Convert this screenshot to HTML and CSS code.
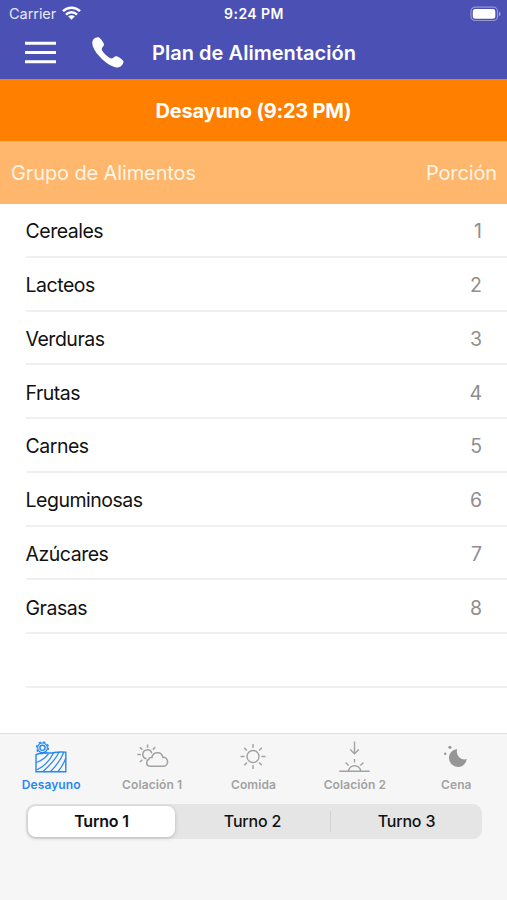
FILE: index.html
```html
<!DOCTYPE html>
<html lang="es">
<head>
<meta charset="utf-8">
<title>Plan de Alimentación</title>
<link rel="stylesheet" href="styles.css">
</head>
<body>
<div class="app">
  <header class="top">
    <div class="status">
      <div class="carrier"><span>Carrier</span>
        <svg class="wifi" width="19" height="14" viewBox="0 0 19 14"><g fill="none" stroke="#fff" stroke-width="2.500"><path d="M1 5.200a12.200 12.200 0 0 1 17 0"/><path d="M4 8.600a7.800 7.800 0 0 1 11 0"/></g><path d="M9.500 13.800L6.200 10.600a4.600 4.600 0 0 1 6.600 0z" fill="#fff"/></svg>
      </div>
      <span class="time">9:24 PM</span>
      <svg class="battery" width="32" height="16" viewBox="0 0 32 16"><rect x="1" y="1.200" width="26.500" height="13.300" rx="4" fill="none" stroke="#fff" stroke-opacity=".4" stroke-width="1.200"/><rect x="2.800" y="3" width="22.500" height="9.800" rx="2.400" fill="#fff"/><path d="M29 5.500c2 .8 2 4 0 4.800z" fill="#fff" fill-opacity=".45"/></svg>
    </div>
    <div class="nav">
      <svg class="menu" width="31" height="24" viewBox="0 0 31 24"><path d="M0 2.200h31M0 11.400h31M0 20.700h31" stroke="#fff" stroke-width="3"/></svg>
      <svg class="phone" width="32" height="32" viewBox="0 0 32 32"><path d="M1.500 2.300C3 .8 5.500-.1 7 .6c1.600.8 4.600 5 5 6.600.4 1.900-2.500 3.400-2.300 5 .3 2.500 6.900 8.800 9.500 9.200 1.700.2 3.500-2.700 5.400-2.200 1.800.5 6 3.300 6.700 4.800.7 1.600-.9 4.200-2.700 5.500-1.500 1.100-3.600 1.300-5.400.8C14.800 27.900 3.700 17.300.8 9.200.1 7.200 0 3.900 1.500 2.300z" fill="#fff"/></svg>
      <h1>Plan de Alimentación</h1>
    </div>
  </header>
  <div class="meal"><span>Desayuno (9:23 PM)</span></div>
  <div class="columns"><span class="group">Grupo de Alimentos</span><span class="portion">Porción</span></div>
  <ul class="foods">
    <li><span>Cereales</span><b>1</b></li>
    <li><span>Lacteos</span><b>2</b></li>
    <li><span>Verduras</span><b>3</b></li>
    <li><span>Frutas</span><b>4</b></li>
    <li><span>Carnes</span><b>5</b></li>
    <li><span>Leguminosas</span><b>6</b></li>
    <li><span>Azúcares</span><b>7</b></li>
    <li><span>Grasas</span><b>8</b></li>
    <li></li>
  </ul>
  <footer class="bottom">
    <nav class="tabs">
      <a class="tab active">
        <svg viewBox="-.500 0 44 40"><g stroke-width="1.400"><circle cx="13" cy="11.800" r="2.600"/><circle cx="13" cy="11.800" r="4.900" stroke-width="1.200"/><circle cx="13" cy="11.800" r="6" stroke-width="1.300" stroke-dasharray="2.300 2.412"/><path d="M6.500 18.700C12 15.500 18 18 25 16.500c4-.8 8-.5 11.300-.3V35.800H6.500z"/><path d="M7 26.500c5-1.700 9-4.500 12-8.800M7 34c7-3 13-9 17-17M13.500 35.500C19 30.500 26 24 29.500 16M21 35.500c6-6 10.500-12 13.500-19.500M28.500 35.500c3.500-4 6-8.500 7.800-13.500" stroke-width="1.200"/></g></svg>
        <span>Desayuno</span></a>
      <a class="tab">
        <svg viewBox="-1.900 0 44 40"><g stroke-width="1.500"><path d="M19 30.300h12c2.800 0 4.700-2 4.700-4.500s-2-4.700-4.700-4.400c-.6-3-2.800-4.700-5.300-4.700-3 0-5.200 2-5.700 4.800-1.500-.4-2.700.4-3 1.700-1.400.6-2.200 1.700-2.200 3.200 0 2.300 1.800 3.900 4.200 3.900z"/><path d="M14.700 22.800a4.500 4.500 0 1 1 5.100-5.500M15.700 8.500v3.300M8 11.300l2.500 2.500M5.500 18.500H9M8 26l2.500-2.300M23.300 11.300L21 13.600"/></g></svg>
        <span>Colación 1</span></a>
      <a class="tab">
        <svg viewBox="0 0 44 40"><g stroke-width="1.400"><circle cx="22" cy="20.500" r="6"/><path d="M22 8v4M22 29v4M9.500 20.500h4M30.500 20.500h4M13.200 11.700l2.700 2.700M28.100 26.600l2.700 2.700M30.800 11.700l-2.700 2.700M15.900 26.600l-2.700 2.700"/></g></svg>
        <span>Comida</span></a>
      <a class="tab">
        <svg viewBox="-1.100 0 44 40"><g stroke-width="1.400"><path d="M20.400 5.500v12M16.100 13.500l4.300 4.300 4.300-4.300M5.200 35.300h30.400M14.500 35.300a6 5.600 0 0 1 12 0M20.400 23v3.500M11.500 26.500l3 3M29.300 26.500l-3 3"/></g></svg>
        <span>Colación 2</span></a>
      <a class="tab">
        <svg viewBox="-1.700 0 44 40"><path d="M21.500 13C16.500 13.700 13.300 17.500 13.300 22a9 9 0 0 0 9 9c4.300 0 8-3 8.700-8-2.500.8-5.200.4-7.300-1.500-2.400-2.200-3-5.300-2.200-8.500z" class="moon"/><circle cx="14.200" cy="11.200" r="1.500" class="moon"/><circle cx="9.500" cy="17.800" r="1.200" class="moon"/></svg>
        <span>Cena</span></a>
    </nav>
    <div class="segments"><button class="on">Turno 1</button><button>Turno 2</button><button class="last">Turno 3</button></div>
  </footer>
</div>
</body>
</html>
```

FILE: styles.css
```css
* { box-sizing: border-box; }
body { margin: 0; font-family: Inter, "Liberation Sans", sans-serif; background: #fff; }
.app { width: 507px; height: 900px; display: flex; flex-direction: column; overflow: hidden; }
svg { display: block; flex: none; }
.top { height: 79px; background: #4b50b4; color: #fff; }
.status { height: 27px; display: grid; grid-template-columns: 1fr auto 1fr; align-items: center; padding: 0 5px 0 9px; }
.carrier { display: flex; align-items: center; gap: 6px; font-size: 14.5px; color: #e7e8fa; letter-spacing: -.05px; }
.wifi { margin-top: -2px; }
.time { font-size: 14px; font-weight: 600; letter-spacing: .45px; margin-right: 3px; }
.battery { justify-self: end; }
.nav { height: 51px; display: flex; align-items: center; padding-left: 25px; }
.phone { margin-left: 36px; }
h1 { margin: 0 0 0 28px; font-size: 20px; font-weight: 600; letter-spacing: .04px; }
.meal { height: 62px; background: #ff8000; color: #fff; display: flex; align-items: center; justify-content: center; font-size: 20px; font-weight: 700; padding-top: 2px; }
.meal span { letter-spacing: -.22px; }
.columns { height: 62.500px; background: #ffb66d; color: #fff5e4; display: flex; align-items: center; justify-content: space-between; padding: 2px 10px 0 11px; font-size: 20px; letter-spacing: -.12px; }
.foods { margin: 0; padding: 0 0 0 25.500px; list-style: none; flex: 1; }
.foods li { height: 53.780px; display: flex; align-items: center; justify-content: space-between; border-bottom: 2px solid #f0f0f1; padding: 3px 25px 0 0; font-size: 19.5px; color: #111; }
.foods li:first-child { height: 54.300px; }
.foods b { font-weight: 400; color: #8e8e90; }
.foods span { letter-spacing: -.48px; }
.bottom { height: 167px; background: #f6f6f6; border-top: 1.500px solid #dedede; }
.tabs { display: grid; grid-template-columns: repeat(5, 1fr); height: 70px; padding-top: 2px; }
.tab { display: flex; flex-direction: column; align-items: center; font-size: 12px; font-weight: 600; color: #a2a2a2; letter-spacing: .1px; }
.tab span { margin-top: 1px; }
.tab.active span { margin-left: 1px; }
.tab svg { width: 44px; height: 40px; fill: none; stroke: currentColor; }
.tab .moon { fill: #969696; stroke: none; }
.tab.active { color: #2588f5; }
.segments { display: grid; grid-template-columns: 149px 1fr 152px; height: 35px; margin: 0 25px 0 26px; background: #e5e5e5; border-radius: 9px; align-items: center; }
.segments button { height: 31px; border: 0; padding: 0 0 1px; background: none; font: 500 16px Inter, sans-serif; letter-spacing: -.2px; color: #111; }
.segments .on { margin-left: 2px; border-radius: 8px; background: #fff; font-weight: 600; box-shadow: 0 1px 4px rgba(0,0,0,.2); }
.segments .last { height: 21px; padding-bottom: 2px; border-left: 1px solid #d2d2d2; }
```
